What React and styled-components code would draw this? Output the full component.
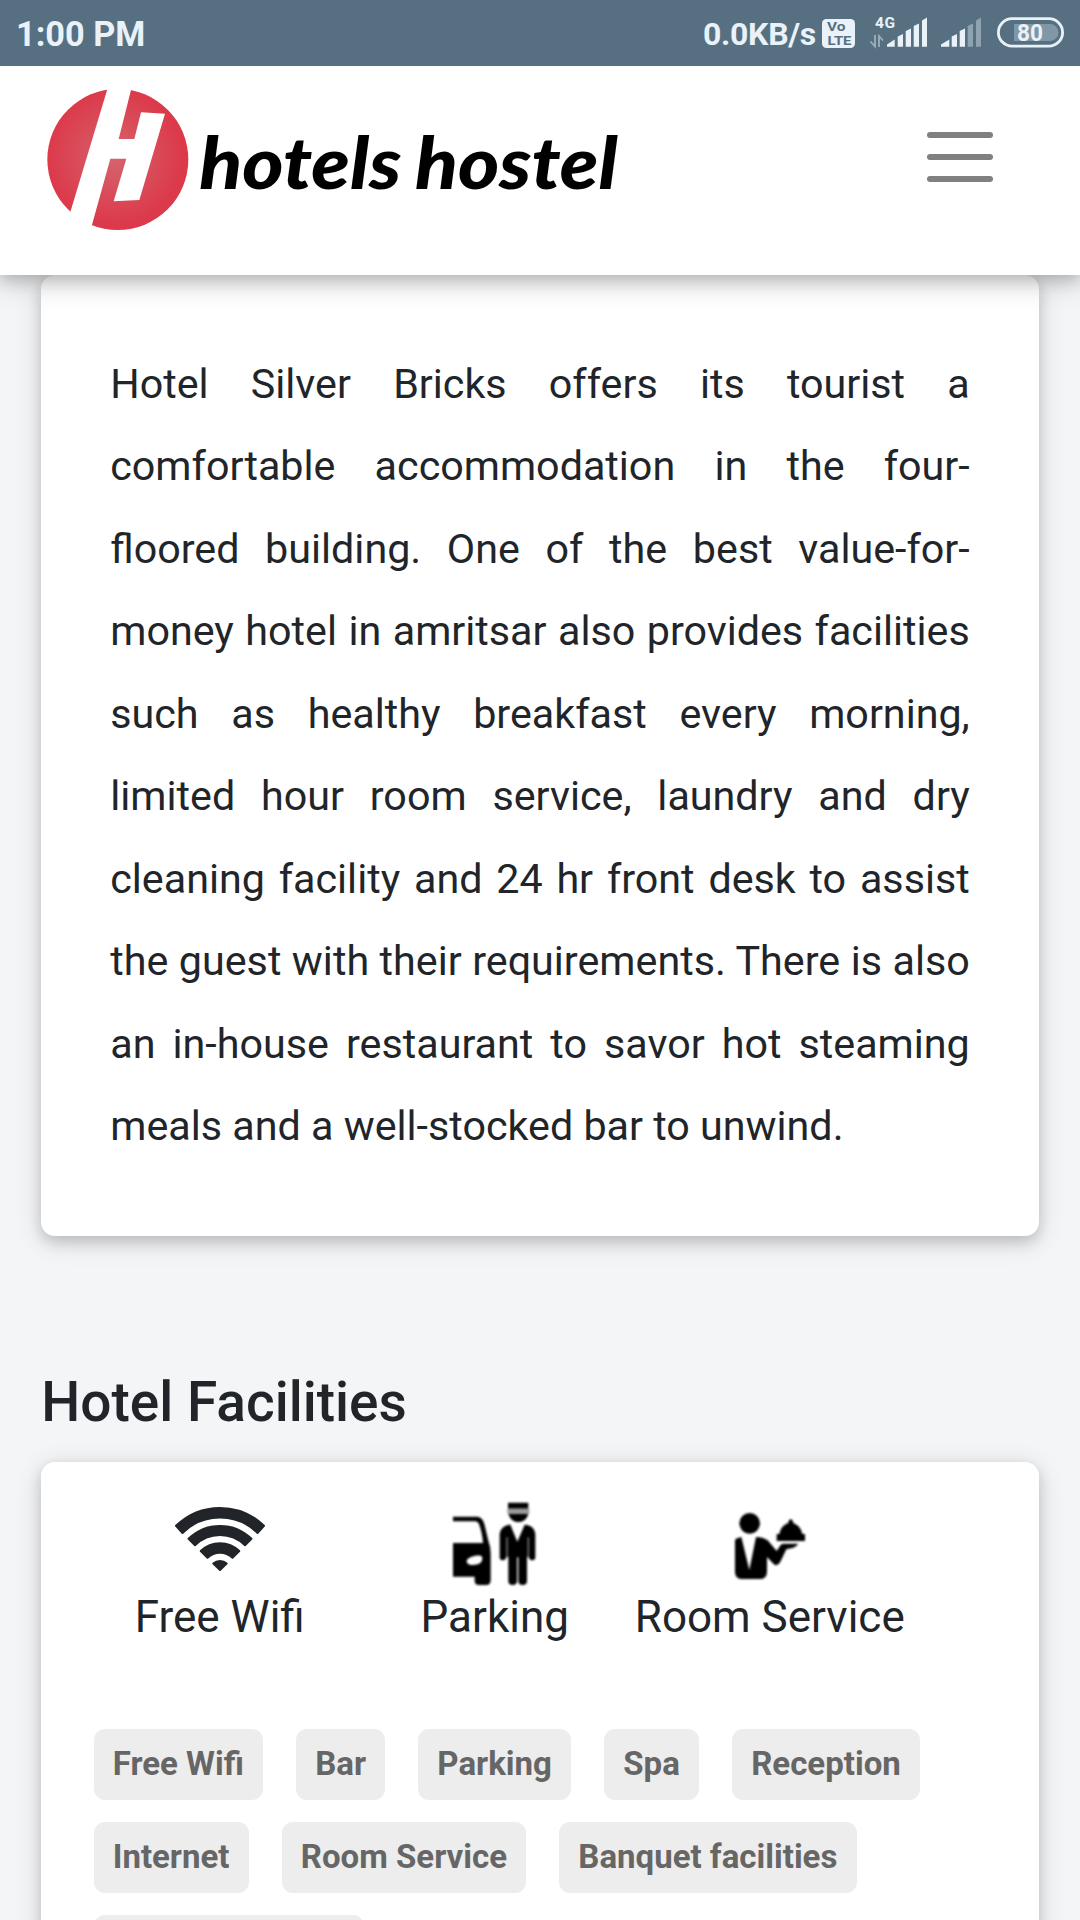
import React, { Component } from "react";
import styled, { createGlobalStyle } from "styled-components";

const GlobalStyle = createGlobalStyle`
  body {
    margin: 0;
    background: #f4f5f7;
    font-family: Roboto, sans-serif;
    color: #212529;
  }
`;

const Screen = styled.div`
  display: flex;
  flex-direction: column;
  width: 1080px;
  height: 1920px;
  overflow: hidden;
  background: #f4f5f7;
`;

const StatusBar = styled.div`
  display: flex;
  align-items: center;
  justify-content: space-between;
  flex: none;
  height: 66px;
  padding: 0 16px 0 16px;
  box-sizing: border-box;
  background: #567082;
  color: #e9f1f9;
  z-index: 2;
`;

const Clock = styled.span`
  font-size: 34.3px;
  font-weight: 700;
  line-height: 66px;
  padding-top: 1px;
`;

const StatusIcons = styled.div`
  display: flex;
  align-items: center;
`;

const Speed = styled.span`
  width: 119px;
  font-size: 32px;
  font-weight: 700;
  letter-spacing: -0.3px;
  line-height: 66px;
  padding-top: 2px;
  white-space: nowrap;
`;

const Header = styled.header`
  display: flex;
  justify-content: space-between;
  flex: none;
  height: 209px;
  padding: 4px 87px 0 30px;
  box-sizing: border-box;
  background: #fff;
  z-index: 1;
  box-shadow: 0 5px 14px rgba(0, 0, 0, 0.16), 0 7px 28px rgba(0, 0, 0, 0.2);
`;

const MenuButton = styled.button`
  display: flex;
  flex-direction: column;
  gap: 16px;
  width: 66px;
  height: 50px;
  margin-top: 61.5px;
  padding: 0;
  border: 0;
  background: none;
`;

const MenuLine = styled.span`
  height: 6px;
  border-radius: 3px;
  background: #808080;
`;

const Card = styled.section`
  flex: none;
  margin: 0 41.25px;
  padding: ${props => props.padding};
  border-radius: 14px;
  background: #fff;
  box-shadow: 0 5.5px 14px rgba(0, 0, 0, 0.16),
    0 5.5px 27.5px rgba(0, 0, 0, 0.12);
`;

const Description = styled.p`
  margin: 0;
  font-size: 41.25px;
  line-height: 82.5px;
  text-align: justify;
`;

const Title = styled.h2`
  margin: 129px 41.25px 22px;
  font-size: 55px;
  font-weight: 500;
  line-height: 75px;
`;

const Facilities = styled.div`
  display: grid;
  grid-template-columns: repeat(3, 275px);
  justify-items: center;
`;

const Facility = styled.div`
  display: flex;
  flex-direction: column;
  align-items: center;
  font-size: 44px;
  line-height: 66px;
  white-space: nowrap;
`;

const FacilityIcon = styled.div`
  height: 84px;
`;

const Tags = styled.div`
  display: flex;
  flex-wrap: wrap;
  gap: 22px 33px;
  margin: 79px 0 0 11.3px;
`;

const Tag = styled.span`
  height: 71px;
  min-width: ${props => (props.wide ? "270px" : "0")};
  padding: 0 19.2px;
  box-sizing: border-box;
  border-radius: 11px;
  background: #ededed;
  color: #666;
  font-size: 33px;
  font-weight: 700;
  line-height: 70px;
`;

const LogoSvg = styled.svg`
  overflow: visible;
`;

const Blurred = styled.svg`
  filter: blur(0.8px);
`;

const SignalIcons = () => (
  <svg width="242" height="66" viewBox="822 0 242 66" fill="#e9f1f9">
    <rect x="822" y="19" width="33" height="29" rx="4.5" />
    <g fill="#567082" fontFamily="Roboto, sans-serif" fontSize="12.5" fontWeight="700">
      <text x="827" y="31" textLength="18.5" lengthAdjust="spacingAndGlyphs">Vo</text>
      <text x="827.5" y="44.5" textLength="24" lengthAdjust="spacingAndGlyphs">LTE</text>
    </g>
    <g fill="none" stroke="#9cafbc" strokeWidth="1.8">
      <path d="M875 35V46.5L870.5 41.5M879 47V36L883 40.5" />
    </g>
    <text x="875" y="28" fontSize="15.5" fontWeight="700" fontFamily="Roboto, sans-serif" textLength="20">4G</text>
    <path d="M887 46.7V44.5L894.7 39.5V46.7ZM897.7 46.7V36.5L903 34V46.7ZM905.7 46.7V31L911 28.5V46.7ZM913.7 46.7V26L919 23.5V46.7ZM922 46.7V20.5L927 17.5V46.7Z" />
    <path d="M941 46.7V44.5L949.3 39.5V46.7ZM951.7 46.7V36.5L957 34V46.7ZM959.7 46.7V31L965 28.5V46.7Z" />
    <path fill="#8ea2b0" d="M967.7 46.7V26L973 23.5V46.7ZM976 46.7V20.5L981 17.5V46.7Z" />
    <rect x="998.4" y="18.7" width="64.2" height="27.4" rx="13.7" fill="none" stroke="#e9f1f9" strokeWidth="2.8" />
    <path fill="#8097a5" d="M1014 24H1050A8.5 8.5 0 0 1 1050 41H1014Z" />
    <text x="1017" y="41" fontSize="24" fontWeight="700" fontFamily="Roboto, sans-serif" textLength="26" lengthAdjust="spacingAndGlyphs">80</text>
  </svg>
);

const Logo = () => (
  <LogoSvg width="700" height="200" viewBox="0 0 2100 600">
    <defs>
      <radialGradient id="ball" gradientUnits="userSpaceOnUse" cx="255" cy="260" r="205">
        <stop offset="0" stopColor="#d5656e" />
        <stop offset="0.55" stopColor="#d94c5a" />
        <stop offset="1" stopColor="#dc394a" />
      </radialGradient>
    </defs>
    <circle cx="263.5" cy="268.5" r="211.5" fill="url(#ball)" />
    <path
      fill="#fff"
      d="M236 44H307L266 207H313L333 127L405 131L328 390L251 394L289 266H241L180 486L103 486Z"
    />
    <g
      fontFamily="Lato, 'Open Sans', sans-serif"
      fontSize="219"
      fontWeight="900"
      fontStyle="italic"
    >
      <text x="508" y="357" textLength="606" lengthAdjust="spacingAndGlyphs">
        hotels
      </text>
      <text x="1155" y="357" textLength="608" lengthAdjust="spacingAndGlyphs">
        hostel
      </text>
    </g>
  </LogoSvg>
);

const WifiIcon = () => (
  <svg width="100" height="90" viewBox="-50 -71 100 90" fill="#212529" stroke="#212529" strokeWidth="2" strokeLinejoin="round">
    <path d="M-44 -45.2A63 63 0 0 1 44 -45.2L37.5 -38A53 53 0 0 0 -37.5 -38Z" />
    <path d="M-31.5 -32.2A45 45 0 0 1 31.5 -32.2L25 -25.8A35.5 35.5 0 0 0 -25 -25.8Z" />
    <path d="M-19.3 -20A27.7 27.7 0 0 1 19.3 -20L12.5 -13.2A18 18 0 0 0 -12.5 -13.2Z" />
    <path d="M-6.7 -7.5A10 10 0 0 1 6.7 -7.5L0 -1Z" />
  </svg>
);

const ParkingIcon = () => (
  <Blurred width="83" height="90" viewBox="162 60 249 270">
    <path
      fillRule="evenodd"
      d="M162 110H230C246 110 252 118 256 132L268 182Q275 200 275 220V300Q275 315 262 315H240Q227 315 227 302V290H162ZM162 124V189H252C251 170 246 148 240 132Q237 124 229 124ZM218 230C206 234 201 240 204 248C208 256 224 257 236 253C248 249 252 240 249 230C245 224 230 226 218 230Z"
    />
    <path d="M327 68H388V86H327ZM328 101H388C384 117 373 126 358 126S333 117 328 101Z" />
    <path fill="#999" d="M325 86H391V101H325Z" />
    <path d="M334 134L355 185L377 134C395 134 409 146 409 165V232Q409 241 400 241Q390 241 390 232L384 230V303Q384 315 371 315Q358 315 358 303V232H354V303Q354 315 341 315Q328 315 328 303V230L321 232Q321 241 311 241Q302 241 302 232V165C302 147 316 134 334 134Z" />
    <path stroke="#888" strokeWidth="4" d="M324 172V232M388 172V232" />
  </Blurred>
);

const RoomServiceIcon = () => (
  <Blurred width="76" height="90" viewBox="336 60 228 270">
    <circle cx="389" cy="130" r="31" />
    <path d="M364 171L388 270L408 171Q429 171 443 181L470 213L482 195Q485 191 491 191H535Q530 199 520 203L499 208L481 245Q471 264 458 249L441 231V275Q441 297 419 297H367Q345 297 345 275V183Q345 176 352 175Z" />
    <path d="M470 183V162H478Q482 137 505 129Q506 118 512 118T520 129Q542 137 547 162H555V183Z" />
  </Blurred>
);

const facilities = [
  { name: "Free Wifi", icon: <WifiIcon /> },
  { name: "Parking", icon: <ParkingIcon /> },
  { name: "Room Service", icon: <RoomServiceIcon /> }
];

const tags = [
  "Free Wifi",
  "Bar",
  "Parking",
  "Spa",
  "Reception",
  "Internet",
  "Room Service",
  "Banquet facilities"
];

export default class App extends Component {
  render() {
    return (
      <Screen>
        <GlobalStyle />
        <StatusBar>
          <Clock>1:00 PM</Clock>
          <StatusIcons>
            <Speed>0.0KB/s</Speed>
            <SignalIcons />
          </StatusIcons>
        </StatusBar>
        <Header>
          <Logo />
          <MenuButton aria-label="Menu">
            <MenuLine />
            <MenuLine />
            <MenuLine />
          </MenuButton>
        </Header>
        <Card padding="67.5px 69px 68.5px">
          <Description>
            Hotel Silver Bricks offers its tourist a comfortable accommodation
            in the four-floored building. One of the best value-for-money hotel
            in amritsar also provides facilities such as healthy breakfast every
            morning, limited hour room service, laundry and dry cleaning
            facility and 24 hr front desk to assist the guest with their
            requirements. There is also an in-house restaurant to savor hot
            steaming meals and a well-stocked bar to unwind.
          </Description>
        </Card>
        <Title>Hotel Facilities</Title>
        <Card padding="38px 41px 60px">
          <Facilities>
            {facilities.map(item => (
              <Facility key={item.name}>
                <FacilityIcon>{item.icon}</FacilityIcon>
                <span>{item.name}</span>
              </Facility>
            ))}
          </Facilities>
          <Tags>
            {tags.map(tag => (
              <Tag key={tag}>{tag}</Tag>
            ))}
            <Tag wide />
          </Tags>
        </Card>
      </Screen>
    );
  }
}
